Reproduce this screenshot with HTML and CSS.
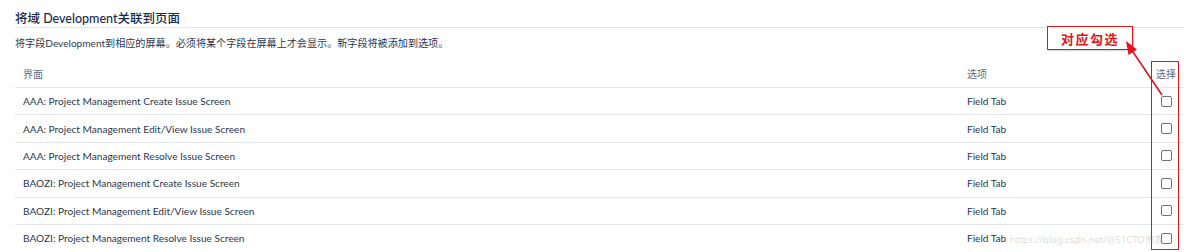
FILE: index.html
```html
<!DOCTYPE html>
<html lang="zh">
<head>
<meta charset="utf-8">
<link rel="stylesheet" href="styles.css">
</head>
<body>
<div class="page">
  <h2 class="title">将域 Development关联到页面</h2>
  <p class="desc">将字段Development到相应的屏幕。必须将某个字段在屏幕上才会显示。新字段将被添加到选项。</p>
  <div class="table">
    <div class="row head">
      <div class="c1">界面</div>
      <div class="c2">选项</div>
      <div class="c3">选择</div>
    </div>
    <div class="row">
      <div class="c1">AAA: Project Management Create Issue Screen</div>
      <div class="c2">Field Tab</div>
      <div class="c3"><span class="cb"></span></div>
    </div>
    <div class="row">
      <div class="c1">AAA: Project Management Edit/View Issue Screen</div>
      <div class="c2">Field Tab</div>
      <div class="c3"><span class="cb"></span></div>
    </div>
    <div class="row">
      <div class="c1">AAA: Project Management Resolve Issue Screen</div>
      <div class="c2">Field Tab</div>
      <div class="c3"><span class="cb"></span></div>
    </div>
    <div class="row">
      <div class="c1">BAOZI: Project Management Create Issue Screen</div>
      <div class="c2">Field Tab</div>
      <div class="c3"><span class="cb"></span></div>
    </div>
    <div class="row">
      <div class="c1">BAOZI: Project Management Edit/View Issue Screen</div>
      <div class="c2">Field Tab</div>
      <div class="c3"><span class="cb"></span></div>
    </div>
    <div class="row">
      <div class="c1">BAOZI: Project Management Resolve Issue Screen</div>
      <div class="c2">Field Tab</div>
      <div class="c3"><span class="cb"></span></div>
    </div>
  </div>
</div>
<div class="note">对应勾选</div>
<div class="selbox"></div>
<svg class="arrow" width="1184" height="252" viewBox="0 0 1184 252">
  <line x1="1162" y1="95" x2="1131" y2="49" stroke="#e0141b" stroke-width="1.6"/>
  <polygon points="1126,41 1128.5,55 1137,49.5" fill="#e0141b"/>
</svg>
<div class="wm">https://blog.csdn.net/@51CTO博客</div>
</body>
</html>
```
FILE: styles.css
```css
html, body {
  margin: 0;
  padding: 0;
  background: #ffffff;
}
body {
  width: 1184px;
  height: 252px;
  overflow: hidden;
  position: relative;
  font-family: "Lato", "Noto Sans CJK SC", sans-serif;
  color: #2b3750;
}
.page {
  padding-left: 15px;
}
.title {
  margin: 0;
  padding-top: 10px;
  height: 17px;
  font-size: 12.5px;
  line-height: 17px;
  font-weight: 500;
  color: #172b4d;
  border-bottom: 1px solid #e4e6ea;
}
.desc {
  margin: 0;
  padding-top: 8px;
  font-size: 10.1px;
  line-height: 15px;
  color: #2b3750;
}
.table {
  margin-top: 8px;
}
.row {
  display: flex;
  align-items: center;
  height: 26.4px;
  border-top: 1px solid #e4e6ea;
  font-size: 10.1px;
}
.row.head {
  border-top: none;
  height: 28px;
  color: #5e6c84;
  font-size: 10px;
}
.c1 {
  width: 944px;
  padding-left: 8px;
  box-sizing: border-box;
}
.c2 {
  width: 192px;
  padding-left: 8px;
  box-sizing: border-box;
}
.c3 {
  width: 33px;
  display: flex;
  justify-content: center;
  padding-right: 3px;
  box-sizing: border-box;
}
.cb {
  width: 9px;
  height: 9px;
  border: 1px solid #6b7280;
  border-radius: 2px;
  background: #fff;
}
.note {
  position: absolute;
  left: 1047px;
  top: 26px;
  width: 86px;
  height: 24px;
  box-sizing: border-box;
  border: 1.5px solid #e0141b;
  box-shadow: 1px 1px 1px rgba(0,0,0,0.15);
  color: #e0141b;
  font-family: "Noto Sans CJK SC", sans-serif;
  font-weight: 700;
  font-size: 13px;
  letter-spacing: 1.5px;
  display: flex;
  align-items: center;
  justify-content: center;
  background: #fff;
}
.selbox {
  position: absolute;
  left: 1151px;
  top: 61px;
  width: 28px;
  height: 189px;
  box-sizing: border-box;
  border: 1.5px solid #e0141b;
}
.arrow {
  position: absolute;
  left: 0;
  top: 0;
  pointer-events: none;
}
.wm {
  position: absolute;
  left: 1010px;
  top: 232px;
  font-family: "Noto Sans", "Noto Sans CJK SC", sans-serif;
  font-size: 9.5px;
  color: rgba(150,150,150,0.35);
  white-space: nowrap;
}
```
